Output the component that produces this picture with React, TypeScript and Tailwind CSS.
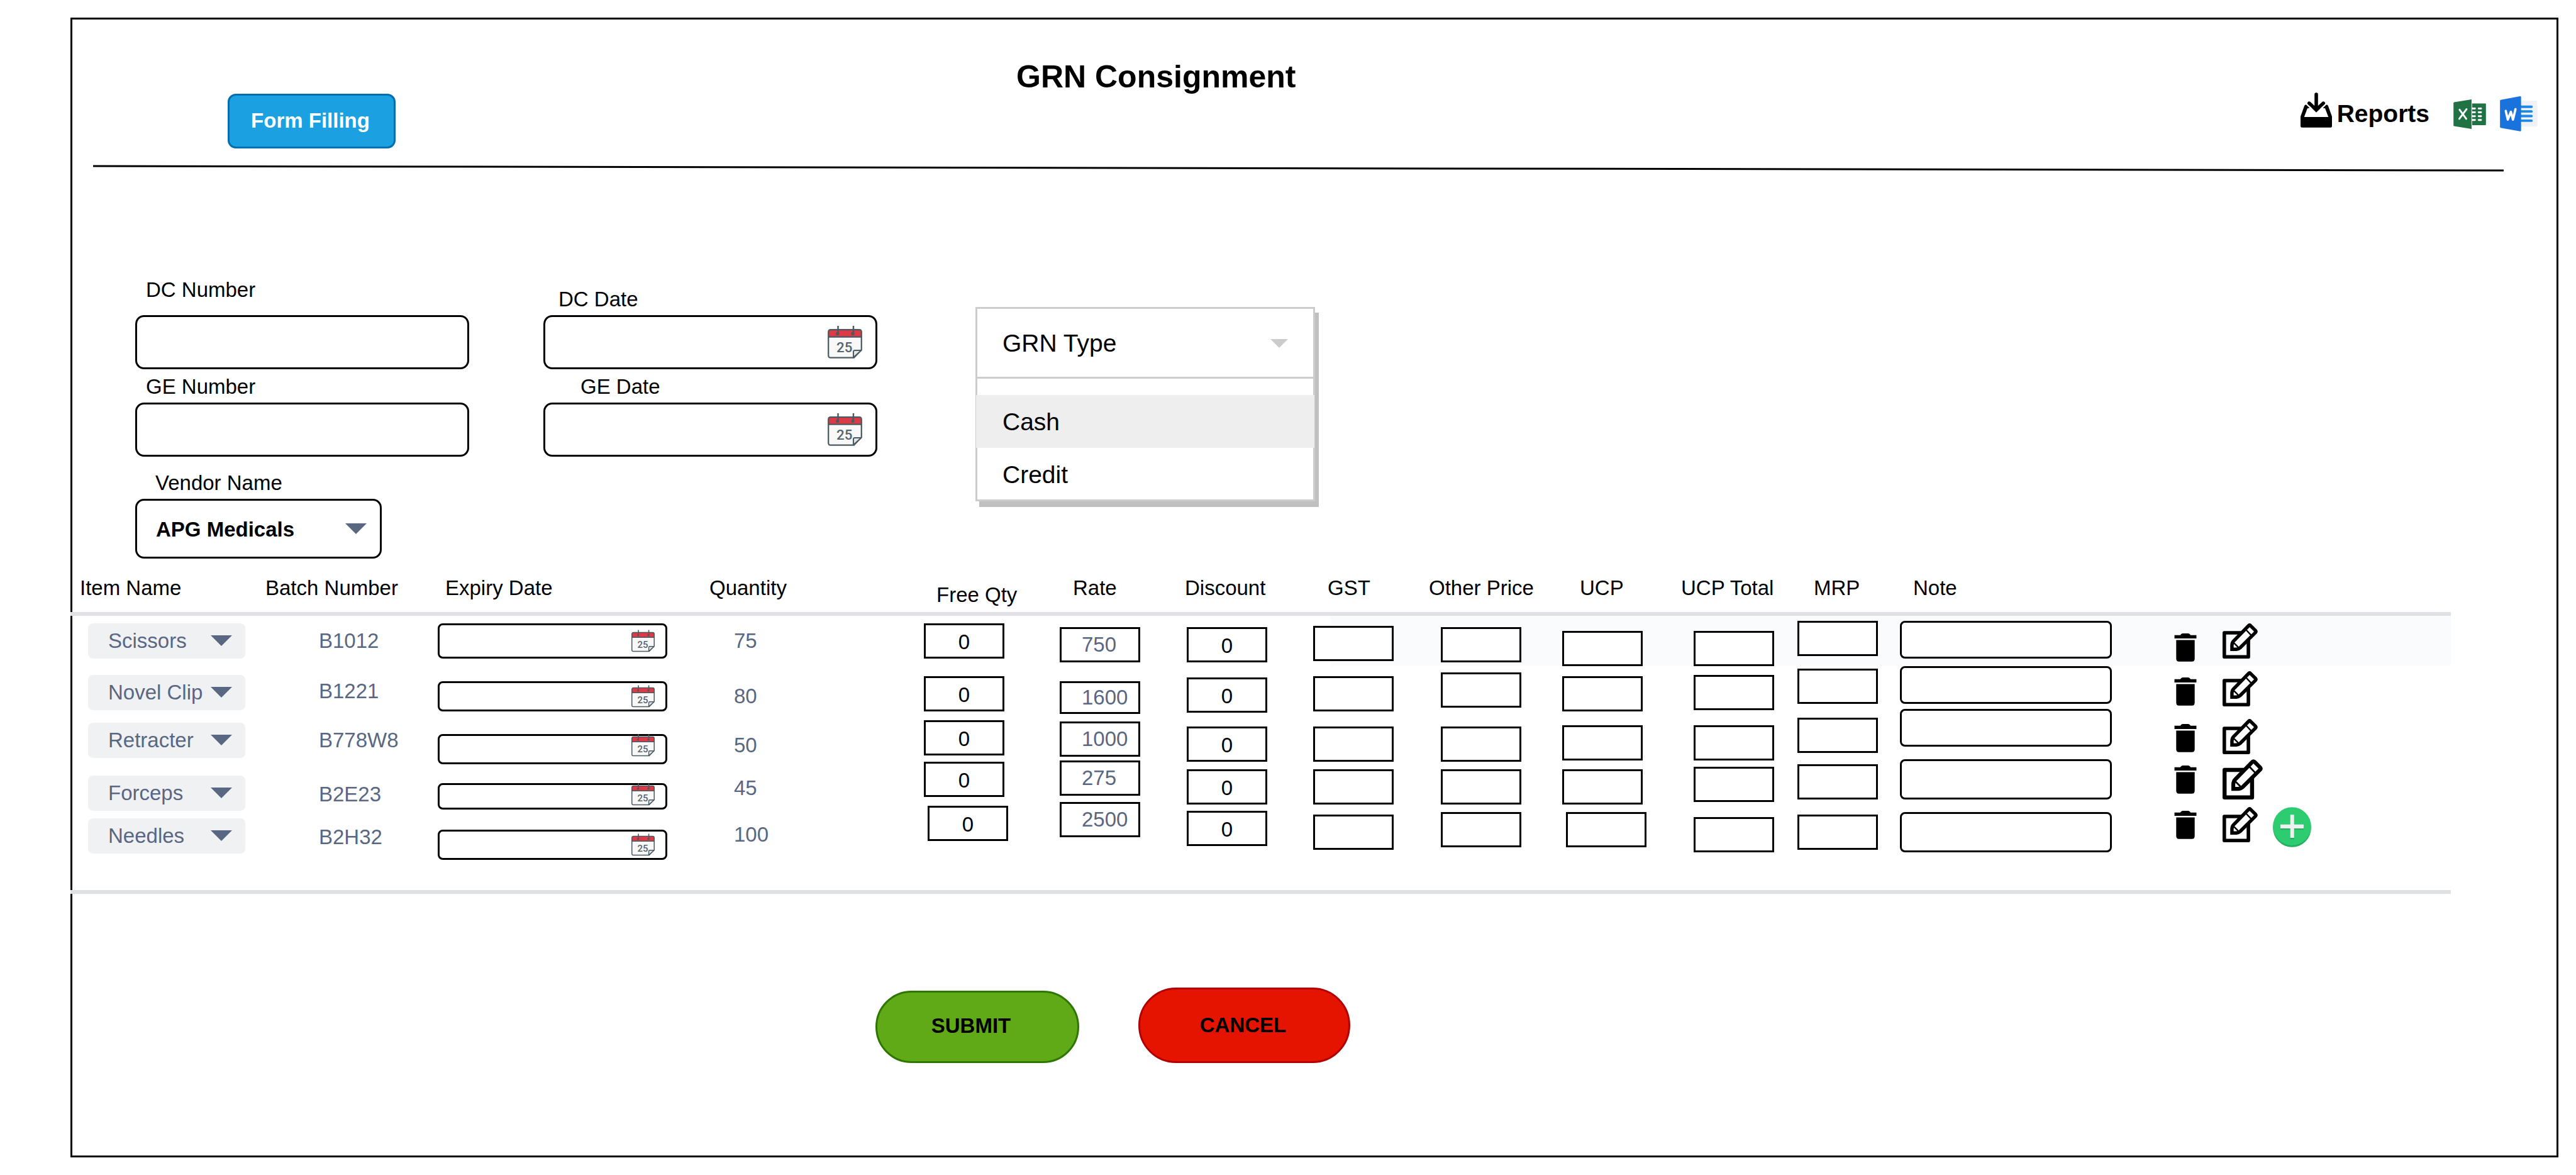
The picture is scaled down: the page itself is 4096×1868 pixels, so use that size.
import React from "react";

type Box = { top: string; h?: string; inset?: string };

type Row = {
  height: string;
  striped?: boolean;
  item: string;
  itemTop: string;
  batch: string;
  batchTop: string;
  expiry: { top: string; h: string; icon: string };
  qty: string;
  qtyTop: string;
  free: Box;
  rate: string;
  rateBox: Box;
  discount: Box;
  gst: Box;
  other: Box;
  ucp: Box;
  ucpTotal: Box;
  mrp: Box;
  note: Box;
  trashTop: string;
  editTop: string;
  editSize: string;
  addTop?: string;
};

const rows: Row[] = [
  {
    height: "h-20",
    striped: true,
    item: "Scissors",
    itemTop: "mt-3",
    batch: "B1012",
    batchTop: "mt-3",
    expiry: { top: "mt-3", h: "h-14", icon: "items-center" },
    qty: "75",
    qtyTop: "mt-3",
    free: { top: "mt-3" },
    rate: "750",
    rateBox: { top: "mt-4.5" },
    discount: { top: "mt-4.5" },
    gst: { top: "mt-4" },
    other: { top: "mt-4.5" },
    ucp: { top: "mt-6" },
    ucpTotal: { top: "mt-6" },
    mrp: { top: "mt-2" },
    note: { top: "mt-2", h: "h-15" },
    trashTop: "mt-7",
    editTop: "mt-3",
    editSize: "size-14",
  },
  {
    height: "h-17",
    item: "Novel Clip",
    itemTop: "mt-3.5",
    batch: "B1221",
    batchTop: "mt-3",
    expiry: { top: "mt-6", h: "h-12", icon: "items-center" },
    qty: "80",
    qtyTop: "mt-5",
    free: { top: "mt-4" },
    rate: "1600",
    rateBox: { top: "mt-6", h: "h-13" },
    discount: { top: "mt-4.5" },
    gst: { top: "mt-4" },
    other: { top: "mt-2.5" },
    ucp: { top: "mt-4" },
    ucpTotal: { top: "mt-3.5" },
    mrp: { top: "mt-1" },
    note: { top: "mt-0", h: "h-15" },
    trashTop: "mt-4.5",
    editTop: "mt-2",
    editSize: "size-14",
  },
  {
    height: "h-20",
    item: "Retracter",
    itemTop: "mt-5.5",
    batch: "B778W8",
    batchTop: "mt-5.5",
    expiry: { top: "mt-10", h: "h-12", icon: "items-start" },
    qty: "50",
    qtyTop: "mt-7.5",
    free: { top: "mt-4.5" },
    rate: "1000",
    rateBox: { top: "mt-5" },
    discount: { top: "mt-7" },
    gst: { top: "mt-7" },
    other: { top: "mt-7" },
    ucp: { top: "mt-6.5" },
    ucpTotal: { top: "mt-6.5" },
    mrp: { top: "mt-3.5" },
    note: { top: "mt-0", h: "h-15" },
    trashTop: "mt-6",
    editTop: "mt-4",
    editSize: "size-14",
  },
  {
    height: "h-17",
    item: "Forceps",
    itemTop: "mt-6.5",
    batch: "B2E23",
    batchTop: "mt-7",
    expiry: { top: "mt-9.5", h: "h-10.5", icon: "items-start" },
    qty: "45",
    qtyTop: "mt-4.5",
    free: { top: "mt-1" },
    rate: "275",
    rateBox: { top: "mt-0.5" },
    discount: { top: "mt-4" },
    gst: { top: "mt-4" },
    other: { top: "mt-4" },
    ucp: { top: "mt-4" },
    ucpTotal: { top: "mt-3" },
    mrp: { top: "mt-2" },
    note: { top: "mt-0", h: "h-16" },
    trashTop: "mt-2.5",
    editTop: "mt-0",
    editSize: "size-16",
  },
  {
    height: "h-35",
    item: "Needles",
    itemTop: "mt-6.5",
    batch: "B2H32",
    batchTop: "mt-7",
    expiry: { top: "mt-11", h: "h-12", icon: "items-center" },
    qty: "100",
    qtyTop: "mt-6",
    free: { top: "mt-1.5", inset: "pl-1.5" },
    rate: "2500",
    rateBox: { top: "mt-0" },
    discount: { top: "mt-3.5" },
    gst: { top: "mt-5" },
    other: { top: "mt-4" },
    ucp: { top: "mt-4", inset: "pl-1.5" },
    ucpTotal: { top: "mt-6" },
    mrp: { top: "mt-5" },
    note: { top: "mt-4", h: "h-16" },
    trashTop: "mt-3.5",
    editTop: "mt-2",
    editSize: "size-14",
    addTop: "mt-2",
  },
];

const headings = [
  { text: "Item Name", col: "w-[308px]", pad: "pl-[15px]" },
  { text: "Batch Number", col: "w-[276px]", pad: "pl-[2px]" },
  { text: "Expiry Date", col: "w-[430px]", pad: "pl-[12px]" },
  { text: "Quantity", col: "w-[343px]", pad: "pl-[2px]" },
  { text: "Free Qty", col: "w-[216px]", pad: "pl-[20px] pt-[11px]" },
  { text: "Rate", col: "w-[197px]", pad: "pl-[21px]" },
  { text: "Discount", col: "w-[206px]", pad: "pl-[2px]" },
  { text: "GST", col: "w-[182px]", pad: "pl-[23px]" },
  { text: "Other Price", col: "w-[214px]", pad: "pl-[2px]" },
  { text: "UCP", col: "w-[187px]", pad: "pl-[28px]" },
  { text: "UCP Total", col: "w-[187px]", pad: "pl-[2px]" },
  { text: "MRP", col: "w-[163px]", pad: "pl-[26px]" },
  { text: "Note", col: "w-[436px]", pad: "pl-[21px]" },
  { text: "", col: "", pad: "pl-0" },
];

function Calendar({ className }: { className: string }) {
  return (
    <svg viewBox="0 0 59 56" className={className} aria-hidden="true">
      <path
        d="M5 6.5H54Q57.8 6.5 57.8 10.5V41L45 54.5H5Q1.2 54.5 1.2 50.5V10.5Q1.2 6.5 5 6.5Z"
        fill="#f8f8f8"
      />
      <path d="M5 6.5H54Q57.8 6.5 57.8 10.5V19H1.2V10.5Q1.2 6.5 5 6.5Z" fill="#dd3a45" />
      <path
        d="M5 6.5H54Q57.8 6.5 57.8 10.5V41L45 54.5H5Q1.2 54.5 1.2 50.5V10.5Q1.2 6.5 5 6.5Z"
        fill="none"
        stroke="#4b5a62"
        strokeWidth="2.4"
      />
      <path d="M1.2 19H57.8" stroke="#4b5a62" strokeWidth="2.4" />
      <path d="M57.5 42H46.5Q44 42 44 44.5V54Z" fill="#e3e5e6" stroke="#4b5a62" strokeWidth="2.2" strokeLinejoin="round" />
      <path d="M17.7 0V13M44 0V13" stroke="#4b5a62" strokeWidth="2.6" />
      <circle cx="16.8" cy="13.3" r="2.8" fill="#4b5a62" />
      <circle cx="43" cy="13.3" r="2.8" fill="#4b5a62" />
      <text x="15" y="45" fontFamily="Roboto, sans-serif" fontWeight="500" fontSize="24" fill="#56656d">
        25
      </text>
    </svg>
  );
}

function Trash() {
  return (
    <svg viewBox="0 0 38 49" className="h-[45px] w-9" aria-hidden="true">
      <path d="M0 3H10Q12 0 14 0H24Q26 0 28 3H38V8.7H0ZM3 11.3H35V43.5Q35 48.8 30 48.8H8Q3 48.8 3 43.5Z" />
    </svg>
  );
}

function Edit({ size }: { size: string }) {
  return (
    <svg viewBox="0 0 60 60" className={size} aria-hidden="true">
      <rect x="3" y="16" width="41" height="41" fill="none" stroke="#000" strokeWidth="6" strokeLinejoin="round" />
      <path
        d="M47.5 3.8L56.2 12.5Q57.4 14 56.2 15.4L30 41.5Q27 44.2 23 44.2H16V37.5Q16 33 18.8 30.2L44.6 3.8Q46 2.5 47.5 3.8Z"
        fill="#fff"
        stroke="#000"
        strokeWidth="5.8"
      />
      <path d="M19 33L27.5 41.5M40 11L49 20.5" stroke="#000" strokeWidth="2.6" />
    </svg>
  );
}

function Plus() {
  return (
    <svg viewBox="0 0 66 69" className="h-16 w-[61px]" aria-hidden="true">
      <circle cx="33" cy="36" r="32.8" fill="#27ae60" />
      <circle cx="33" cy="33" r="32.8" fill="#2ecc71" />
      <path d="M30 15.5H36.5V32.5H53V39H36.5V55.5H30V39H13V32.5H30Z" fill="#27ae60" />
      <path d="M30 13H36.5V30H53V36.6H36.5V52.8H30V36.6H13V30H30Z" fill="#ecf0f1" />
    </svg>
  );
}

function Inbox() {
  return (
    <svg viewBox="0 0 54 60" className="h-14 w-[50px]" aria-hidden="true">
      <path d="M0 41L6.5 23Q7.5 20 10 21L15.5 26.5L11.8 27L6.2 42H47.8L42.2 27L38.5 26.5L44 21Q46.5 20 47.5 23L54 41V57.5Q54 60 51.5 60H2.5Q0 60 0 57.5Z" />
      <path d="M27 3V28M14.8 18.2L27 29.5L39.2 18.2" fill="none" stroke="#000" strokeWidth="6" strokeLinecap="round" />
      <path d="M20 27L27 34L34 27L27 24Z" />
    </svg>
  );
}

function Excel() {
  return (
    <svg viewBox="0 0 56 51" className="h-[47px] w-[52px]" aria-hidden="true">
      <path d="M31 7H55Q56 7 56 8V43.5Q56 44.5 55 44.5H31Z" fill="#207245" />
      <path d="M31.2 0V51L1 46Q0 45.8 0 44.8V6.2Q0 5.3 1 5Z" fill="#207245" />
      <path d="M31.6 7V44.5" stroke="#fff" strokeWidth="1" />
      <path
        d="M33 15.8H37M33 22.3H37M33 29H37M33 35.6H37M43.5 15.8H47.5M43.5 22.3H47.5M43.5 29H47.5M43.5 35.6H47.5"
        stroke="#fff"
        strokeWidth="3.2"
        strokeLinecap="round"
      />
      <path d="M10.5 17.8L22 33.5M22.5 17L10 33.5" stroke="#fff" strokeWidth="3.2" strokeLinecap="round" />
    </svg>
  );
}

function Word() {
  return (
    <svg viewBox="0 0 65 61" className="h-14 w-15" aria-hidden="true">
      <rect x="30" y="8" width="34.6" height="44.5" rx="1.5" fill="#eff3f7" />
      <path d="M36 18.2H54.6M36 26.3H54.6M36 34.3H54.6M36 42.4H54.6" stroke="#1e88e5" strokeWidth="4.2" strokeLinecap="round" />
      <path d="M34.8 0.1Q36.5 0 36.5 1.5V59.5Q36.5 61 34.8 60.7L1.2 54.8Q0 54.5 0 53.2V7.8Q0 6.6 1.2 6.3Z" fill="#1a72dc" />
      <path d="M10 25.5L13.5 40.5L18.8 27L22.5 40.5L26.8 22.5" fill="none" stroke="#fff" strokeWidth="4" strokeLinecap="round" strokeLinejoin="round" />
    </svg>
  );
}

function Caret({ className }: { className: string }) {
  return (
    <svg viewBox="0 0 34 17" className={className} aria-hidden="true">
      <path d="M0 0H34L17 17Z" fill="currentColor" />
    </svg>
  );
}

function Cell({
  row,
  pad = "pl-0",
  fill = "bg-[#fafbfc]",
  children,
}: {
  row: Row;
  pad?: string;
  fill?: string;
  children: React.ReactNode;
}) {
  return (
    <td className={`p-0 align-top ${row.striped ? fill : ""} ${row.addTop ? "border-b-6 border-[#dfe1e5]" : ""}`}>
      <div className={`flex items-start ${row.height} ${pad}`}>{children}</div>
    </td>
  );
}

function Field({ label, box, value = "", text = "text-center" }: { label: string; box: Box; value?: string; text?: string }) {
  return (
    <div className={box.inset ?? "pl-0"}>
      <input
        type="text"
        aria-label={label}
        defaultValue={value}
        className={`block w-32 border-3 border-black bg-white leading-10 ${text} ${box.top} ${box.h ?? "h-14"}`}
      />
    </div>
  );
}

function DateField({ id, label, pad }: { id: string; label: string; pad: string }) {
  return (
    <>
      <label htmlFor={id} className={`block leading-10 ${pad}`}>
        {label}
      </label>
      <div className="relative mt-[5px]">
        <input id={id} type="text" className="block h-[86px] w-full rounded-[14px] border-3 border-black bg-white pr-24 pl-4" />
        <button type="button" aria-label={`Pick ${label}`} className="absolute inset-y-0 right-6 flex items-center">
          <Calendar className="h-[52px] w-[55px]" />
        </button>
      </div>
    </>
  );
}

export default function App() {
  return (
    <div className="flex min-h-screen bg-white p-7 pl-28 font-['Liberation_Sans',Arial,sans-serif] text-[33px] text-black">
      <main className="flex-1 border-3 border-black">
        <header className="flex h-[231px] items-start">
          <button
            type="button"
            className="mt-[118px] ml-[247px] h-[87px] w-[267px] shrink-0 rounded-[13px] border-3 border-[#006eaf] bg-[#1ba1e2] pr-1 pb-0.5 font-bold text-white"
          >
            Form Filling
          </button>
          <h1 className="mt-[61px] ml-[987px] text-[50px] leading-[60px] font-bold whitespace-nowrap">GRN Consignment</h1>
          <div className="mt-[116px] mr-[30px] ml-auto flex items-center">
            <a href="#reports" className="mr-[38px] flex items-center gap-2 text-[39px] leading-10 font-bold">
              <span className="pb-3">
                <Inbox />
              </span>
              Reports
            </a>
            <button type="button" aria-label="Export to Excel" className="mr-[22px]">
              <Excel />
            </button>
            <button type="button" aria-label="Export to Word">
              <Word />
            </button>
          </div>
        </header>

        <div className="mr-[84px] ml-[33px]">
          <svg viewBox="0 0 3832 12" preserveAspectRatio="none" className="block h-3 w-full" aria-hidden="true">
            <path d="M0 2L3832 9" stroke="#000" strokeWidth="3" />
          </svg>
        </div>

        <section className="flex items-start pt-[167px] pl-[100px]">
          <div className="w-[531px]">
            <label htmlFor="dc-number" className="block pl-[17px] leading-10">
              DC Number
            </label>
            <input id="dc-number" type="text" className="mt-5 block h-[86px] w-full rounded-[14px] border-3 border-black bg-white px-4" />
            <label htmlFor="ge-number" className="mt-2 block pl-[17px] leading-10">
              GE Number
            </label>
            <input id="ge-number" type="text" className="mt-[5px] block h-[86px] w-full rounded-[14px] border-3 border-black bg-white px-4" />
            <label htmlFor="vendor" className="mt-[22px] block pl-8 leading-10">
              Vendor Name
            </label>
            <div className="relative mt-[5px] w-[392px]">
              <select
                id="vendor"
                className="block h-[95px] w-full appearance-none rounded-[14px] border-3 border-black bg-white pt-0.5 pl-[30px] font-bold"
              >
                <option>APG Medicals</option>
              </select>
              <Caret className="pointer-events-none absolute top-[39px] right-6 h-[17px] w-[34px] text-[#596780]" />
            </div>
          </div>

          <div className="mt-[15px] ml-[118px] w-[531px]">
            <DateField id="dc-date" label="DC Date" pad="pl-6" />
            <div className="mt-2">
              <DateField id="ge-date" label="GE Date" pad="pl-[59px]" />
            </div>
          </div>

          <div className="mt-[47px] ml-[156px] w-[540px] border-3 border-[#cccccc] bg-white text-[39px] shadow-[6px_9px_0_#c0c0c0]">
            <button
              type="button"
              aria-haspopup="listbox"
              aria-expanded="true"
              className="flex h-[111px] w-full items-center justify-between border-b-3 border-[#cccccc] pt-0.5 pr-10 pl-10"
            >
              GRN Type
              <Caret className="h-[14px] w-7 text-[#cccccc]" />
            </button>
            <ul role="listbox" aria-label="GRN Type" className="pt-[26px]">
              <li role="option" aria-selected="true" className="-mx-0.5 h-[84px] bg-[#eeeeee] pl-[42px] leading-[86px]">
                Cash
              </li>
              <li role="option" aria-selected="false" className="h-[82px] pl-10 leading-[86px]">
                Credit
              </li>
            </ul>
          </div>
        </section>

        <div className="mt-[27px] mr-[168px] -ml-[3px]">
          <table className="w-full table-fixed border-separate border-spacing-0 text-[#596783]">
            <colgroup>
              {headings.map((h) => (
                <col key={h.text} className={h.col} />
              ))}
            </colgroup>
            <thead>
              <tr>
                {headings.map((h) => (
                  <th
                    key={h.text}
                    scope="col"
                    className="border-b-6 border-[#dfe1e5] p-0 text-left align-top font-normal whitespace-nowrap text-black"
                  >
                    <div className={`h-[58px] leading-10 ${h.pad}`}>{h.text}</div>
                  </th>
                ))}
              </tr>
            </thead>
            <tbody>
              {rows.map((r) => (
                <tr key={r.item}>
                  <Cell row={r} pad="pl-7" fill="bg-transparent">
                    <div className={`relative w-[250px] ${r.itemTop}`}>
                      <select
                        aria-label="Item name"
                        defaultValue={r.item}
                        className="block h-14 w-full appearance-none rounded-lg bg-[#f0f1f3] pl-8"
                      >
                        {rows.map((o) => (
                          <option key={o.item}>{o.item}</option>
                        ))}
                      </select>
                      <Caret className="pointer-events-none absolute top-[19px] right-[21px] h-[17px] w-[34px]" />
                    </div>
                  </Cell>
                  <Cell row={r} pad="pl-[87px]" fill="bg-transparent">
                    <span className={`leading-14 ${r.batchTop}`}>{r.batch}</span>
                  </Cell>
                  <Cell row={r} fill="bg-transparent">
                    <div className={`relative w-[365px] ${r.expiry.top}`}>
                      <input
                        type="text"
                        aria-label={`Expiry date of ${r.item}`}
                        className={`block w-full rounded-lg border-3 border-black bg-white pr-16 pl-3 ${r.expiry.h}`}
                      />
                      <button
                        type="button"
                        aria-label={`Pick expiry date of ${r.item}`}
                        className={`absolute inset-y-0 right-5 flex ${r.expiry.icon}`}
                      >
                        <Calendar className="h-9 w-[37px]" />
                      </button>
                    </div>
                  </Cell>
                  <Cell row={r} pad="pl-[41px]" fill="bg-transparent">
                    <span className={`leading-14 ${r.qtyTop}`}>{r.qty}</span>
                  </Cell>
                  <Cell row={r} fill="bg-transparent">
                    <Field label={`Free quantity of ${r.item}`} box={r.free} value="0" text="pt-1 text-center text-black" />
                  </Cell>
                  <Cell row={r} fill="bg-transparent">
                    <Field label={`Rate of ${r.item}`} box={r.rateBox} value={r.rate} text="pl-8 text-left" />
                  </Cell>
                  <Cell row={r} pad="pl-[5px]" fill="bg-transparent">
                    <Field label={`Discount on ${r.item}`} box={r.discount} value="0" text="pt-1 text-center text-black" />
                  </Cell>
                  <Cell row={r} fill="bg-[linear-gradient(90deg,white_27px,#fafbfc_27px)]">
                    <Field label={`GST on ${r.item}`} box={r.gst} />
                  </Cell>
                  <Cell row={r} pad="pl-[21px]">
                    <Field label={`Other price of ${r.item}`} box={r.other} />
                  </Cell>
                  <Cell row={r}>
                    <Field label={`UCP of ${r.item}`} box={r.ucp} />
                  </Cell>
                  <Cell row={r} pad="pl-[22px]">
                    <Field label={`UCP total of ${r.item}`} box={r.ucpTotal} />
                  </Cell>
                  <Cell row={r}>
                    <Field label={`MRP of ${r.item}`} box={r.mrp} />
                  </Cell>
                  <Cell row={r}>
                    <input
                      type="text"
                      aria-label={`Note on ${r.item}`}
                      className={`block w-[337px] rounded-lg border-3 border-black bg-white px-3 ${r.note.top} ${r.note.h}`}
                    />
                  </Cell>
                  <Cell row={r}>
                    <button type="button" aria-label={`Delete ${r.item}`} className={`mr-[41px] text-black ${r.trashTop}`}>
                      <Trash />
                    </button>
                    <button type="button" aria-label={`Edit ${r.item}`} className={r.editTop}>
                      <Edit size={r.editSize} />
                    </button>
                    {r.addTop && (
                      <button type="button" aria-label="Add row" className={`ml-6 ${r.addTop}`}>
                        <Plus />
                      </button>
                    )}
                  </Cell>
                </tr>
              ))}
            </tbody>
          </table>
        </div>

        <div className="mt-[149px] flex items-end gap-[94px] pl-[1277px] font-bold">
          <button type="submit" className="h-[115px] w-[324px] rounded-full border-3 border-[#2d7600] bg-[#60a917] pr-5 pb-1">
            SUBMIT
          </button>
          <button type="button" className="h-[120px] w-[337px] rounded-full border-3 border-[#b20000] bg-[#e51400] pr-1">
            CANCEL
          </button>
        </div>
      </main>
    </div>
  );
}
